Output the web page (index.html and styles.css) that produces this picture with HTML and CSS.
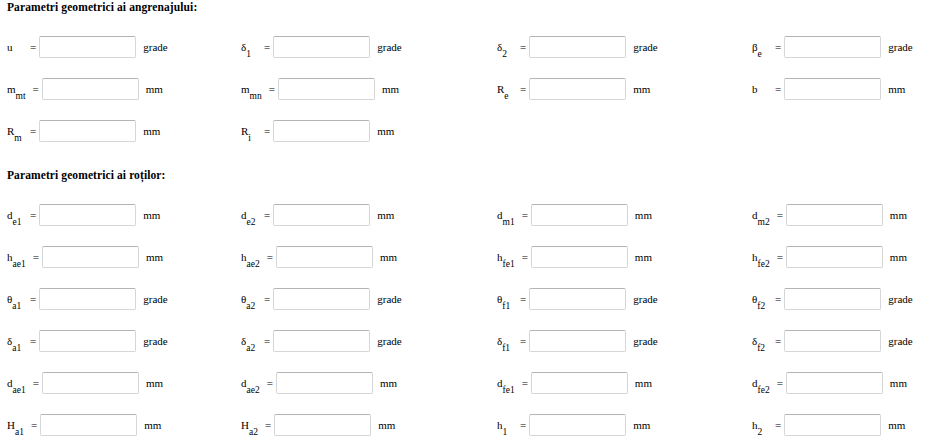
FILE: index.html
```html
<!DOCTYPE html>
<html lang="ro">
<head>
  <meta charset="UTF-8" />
  <meta name="viewport" content="width=device-width, initial-scale=1.0" />
  <title>Parametri geometrici</title>
  <link rel="stylesheet" href="styles.css">
</head>
<body>

  <div class="page">
    <h3 class="section-title">Parametri geometrici ai angrenajului:</h3>

    <div class="param-row">
      <div class="param"><span class="sym">u</span><span class="eq">=</span><input type="text" /><span class="unit">grade</span></div>
      <div class="param"><span class="sym">&delta;<sub>1</sub></span><span class="eq">=</span><input type="text" /><span class="unit">grade</span></div>
      <div class="param"><span class="sym">&delta;<sub>2</sub></span><span class="eq">=</span><input type="text" /><span class="unit">grade</span></div>
      <div class="param"><span class="sym">&beta;<sub>e</sub></span><span class="eq">=</span><input type="text" /><span class="unit">grade</span></div>
    </div>
    <div class="param-row">
      <div class="param"><span class="sym">m<sub>mt</sub></span><span class="eq">=</span><input type="text" /><span class="unit">mm</span></div>
      <div class="param"><span class="sym">m<sub>mn</sub></span><span class="eq">=</span><input type="text" /><span class="unit">mm</span></div>
      <div class="param"><span class="sym">R<sub>e</sub></span><span class="eq">=</span><input type="text" /><span class="unit">mm</span></div>
      <div class="param"><span class="sym">b</span><span class="eq">=</span><input type="text" /><span class="unit">mm</span></div>
    </div>
    <div class="param-row">
      <div class="param"><span class="sym">R<sub>m</sub></span><span class="eq">=</span><input type="text" /><span class="unit">mm</span></div>
      <div class="param"><span class="sym">R<sub>i</sub></span><span class="eq">=</span><input type="text" /><span class="unit">mm</span></div>
    </div>

    <h3 class="section-title second">Parametri geometrici ai roților:</h3>

    <div class="param-row">
      <div class="param"><span class="sym">d<sub>e1</sub></span><span class="eq">=</span><input type="text" /><span class="unit">mm</span></div>
      <div class="param"><span class="sym">d<sub>e2</sub></span><span class="eq">=</span><input type="text" /><span class="unit">mm</span></div>
      <div class="param"><span class="sym">d<sub>m1</sub></span><span class="eq">=</span><input type="text" /><span class="unit">mm</span></div>
      <div class="param"><span class="sym">d<sub>m2</sub></span><span class="eq">=</span><input type="text" /><span class="unit">mm</span></div>
    </div>
    <div class="param-row">
      <div class="param"><span class="sym">h<sub>ae1</sub></span><span class="eq">=</span><input type="text" /><span class="unit">mm</span></div>
      <div class="param"><span class="sym">h<sub>ae2</sub></span><span class="eq">=</span><input type="text" /><span class="unit">mm</span></div>
      <div class="param"><span class="sym">h<sub>fe1</sub></span><span class="eq">=</span><input type="text" /><span class="unit">mm</span></div>
      <div class="param"><span class="sym">h<sub>fe2</sub></span><span class="eq">=</span><input type="text" /><span class="unit">mm</span></div>
    </div>
    <div class="param-row">
      <div class="param"><span class="sym">&theta;<sub>a1</sub></span><span class="eq">=</span><input type="text" /><span class="unit">grade</span></div>
      <div class="param"><span class="sym">&theta;<sub>a2</sub></span><span class="eq">=</span><input type="text" /><span class="unit">grade</span></div>
      <div class="param"><span class="sym">&theta;<sub>f1</sub></span><span class="eq">=</span><input type="text" /><span class="unit">grade</span></div>
      <div class="param"><span class="sym">&theta;<sub>f2</sub></span><span class="eq">=</span><input type="text" /><span class="unit">grade</span></div>
    </div>
    <div class="param-row">
      <div class="param"><span class="sym">&delta;<sub>a1</sub></span><span class="eq">=</span><input type="text" /><span class="unit">grade</span></div>
      <div class="param"><span class="sym">&delta;<sub>a2</sub></span><span class="eq">=</span><input type="text" /><span class="unit">grade</span></div>
      <div class="param"><span class="sym">&delta;<sub>f1</sub></span><span class="eq">=</span><input type="text" /><span class="unit">grade</span></div>
      <div class="param"><span class="sym">&delta;<sub>f2</sub></span><span class="eq">=</span><input type="text" /><span class="unit">grade</span></div>
    </div>
    <div class="param-row">
      <div class="param"><span class="sym">d<sub>ae1</sub></span><span class="eq">=</span><input type="text" /><span class="unit">mm</span></div>
      <div class="param"><span class="sym">d<sub>ae2</sub></span><span class="eq">=</span><input type="text" /><span class="unit">mm</span></div>
      <div class="param"><span class="sym">d<sub>fe1</sub></span><span class="eq">=</span><input type="text" /><span class="unit">mm</span></div>
      <div class="param"><span class="sym">d<sub>fe2</sub></span><span class="eq">=</span><input type="text" /><span class="unit">mm</span></div>
    </div>
    <div class="param-row">
      <div class="param"><span class="sym">H<sub>a1</sub></span><span class="eq">=</span><input type="text" /><span class="unit">mm</span></div>
      <div class="param"><span class="sym">H<sub>a2</sub></span><span class="eq">=</span><input type="text" /><span class="unit">mm</span></div>
      <div class="param"><span class="sym">h<sub>1</sub></span><span class="eq">=</span><input type="text" /><span class="unit">mm</span></div>
      <div class="param"><span class="sym">h<sub>2</sub></span><span class="eq">=</span><input type="text" /><span class="unit">mm</span></div>
    </div>
  </div>

</body>
</html>
```

FILE: styles.css
```css
* {
  box-sizing: border-box;
  font-family: "Liberation Serif", "Times New Roman", serif;
}

body {
  margin: 0;
  padding: 0;
  background: #fff;
  color: #000;
  font-size: 11px;
}

.page {
  padding: 0 7px;
}

.section-title {
  margin: 0;
  height: 14px;
  line-height: 14px;
  font-size: 11.5px;
  letter-spacing: 0.1px;
  font-weight: bold;
}

.section-title.second {
  margin-top: 16px;
}

.section-title + .param-row {
  margin-top: 12px;
}

.param-row {
  display: grid;
  grid-template-columns: 234px 256px 255px auto;
  height: 42px;
  align-items: center;
}

.param {
  display: flex;
  align-items: center;
}

.sym {
  display: inline-block;
  min-width: 23px;
  padding-right: 7px;
  white-space: nowrap;
}

.sym sub {
  font-size: 9.5px;
  vertical-align: -6px;
  line-height: 0;
}

.eq {
  margin-right: 3px;
}

input[type="text"] {
  width: 97px;
  height: 22px;
  margin: 0;
  padding: 2px 4px;
  border: 1px solid #d6d6d6;
  border-top-color: #b4b4b4;
  border-radius: 2px;
  background: #fff;
}

.unit {
  margin-left: 7px;
}
```
